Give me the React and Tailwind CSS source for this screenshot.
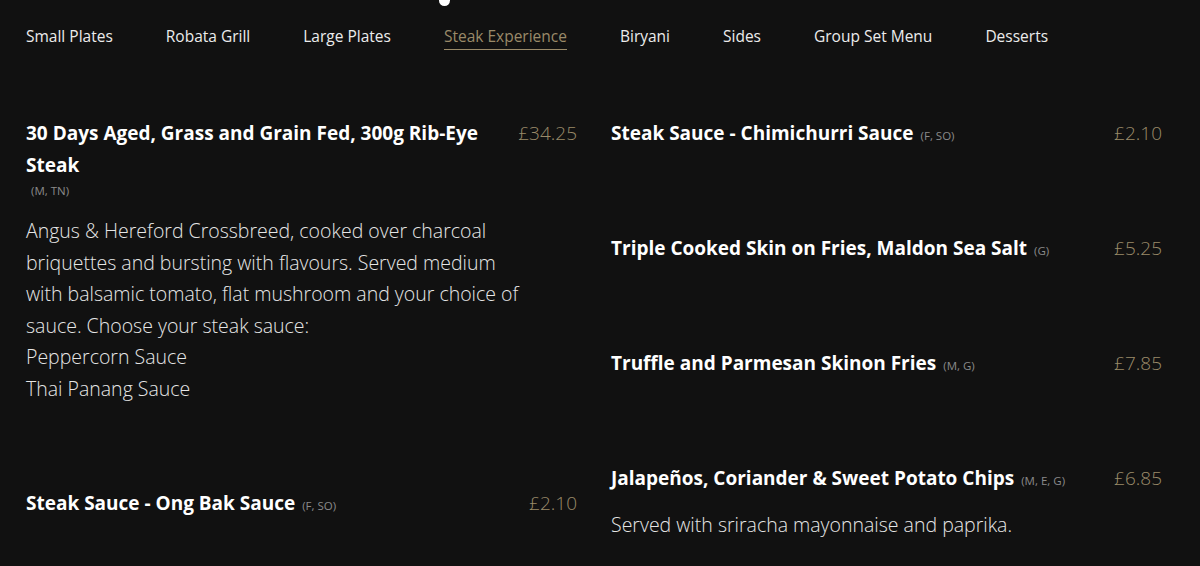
const tabs = ['Small Plates', 'Robata Grill', 'Large Plates', 'Steak Experience', 'Biryani', 'Sides', 'Group Set Menu', 'Desserts'];

const Item = ({ title, allergens, allergenBlock, price, children, descClass = 'mt-[15px]' }) => (
  <div className="flex justify-between items-start">
    <div className="flex-1 min-w-0">
      <h3 className="text-[19px] leading-[32px] font-bold text-white max-w-[480px]">
        {title}
        {allergens && !allergenBlock && (
          <span className="text-[11.5px] leading-none font-normal text-[#8a8a8a] ml-[7px]">({allergens})</span>
        )}
      </h3>
      {allergenBlock && (
        <div className="text-[11.5px] leading-[16px] text-[#8a8a8a] mt-[2px] pl-[5px]">({allergens})</div>
      )}
      {children && (
        <div className={`${descClass} text-[19.5px] leading-[31.5px] font-light text-[#e6e6e6] w-[502px]`}>
          {children}
        </div>
      )}
    </div>
    <div className="text-[19px] leading-[32px] font-light text-[#9a8a69] shrink-0">{price}</div>
  </div>
);

export default function App() {
  return (
    <div className="min-h-screen bg-[#111111] relative overflow-hidden" style={{ fontFamily: '"Open Sans", Lato, sans-serif' }}>
      <div className="absolute left-[439px] top-[-5px] w-[11px] h-[11px] rounded-full bg-white" />

      {/* Tabs */}
      <nav className="flex gap-[53px] pl-[26px] pt-[24px]">
        {tabs.map((t) => (
          <span
            key={t}
            className={
              t === 'Steak Experience'
                ? 'text-[15.5px] leading-[24px] text-[#9a8a69] border-b-[1.5px] border-[#9a8a69] pb-[1px]'
                : 'text-[15.5px] leading-[24px] text-[#ececec] pb-[1px]'
            }
          >
            {t}
          </span>
        ))}
      </nav>

      <div className="grid grid-cols-2 gap-x-[34px] pl-[26px] pr-[38px] mt-[67px]">
        <div className="flex flex-col gap-[83px]">
          <Item
            title="30 Days Aged, Grass and Grain Fed, 300g Rib-Eye Steak"
            allergens="M, TN"
            allergenBlock
            price="£34.25"
            descClass="mt-[16px]"
          >
            Angus &amp; Hereford Crossbreed, cooked over charcoal briquettes and bursting with flavours. Served medium with balsamic tomato, flat mushroom and your choice of sauce. Choose your steak sauce:
            <br />
            Peppercorn Sauce
            <br />
            Thai Panang Sauce
          </Item>
          <Item title="Steak Sauce - Ong Bak Sauce" allergens="F, SO" price="£2.10" />
        </div>

        <div className="flex flex-col gap-[83px]">
          <Item title="Steak Sauce - Chimichurri Sauce" allergens="F, SO" price="£2.10" />
          <Item title="Triple Cooked Skin on Fries, Maldon Sea Salt" allergens="G" price="£5.25" />
          <Item title="Truffle and Parmesan Skinon Fries" allergens="M, G" price="£7.85" />
          <Item title="Jalapeños, Coriander & Sweet Potato Chips" allergens="M, E, G" price="£6.85">
            Served with sriracha mayonnaise and paprika.
          </Item>
        </div>
      </div>
    </div>
  );
}
